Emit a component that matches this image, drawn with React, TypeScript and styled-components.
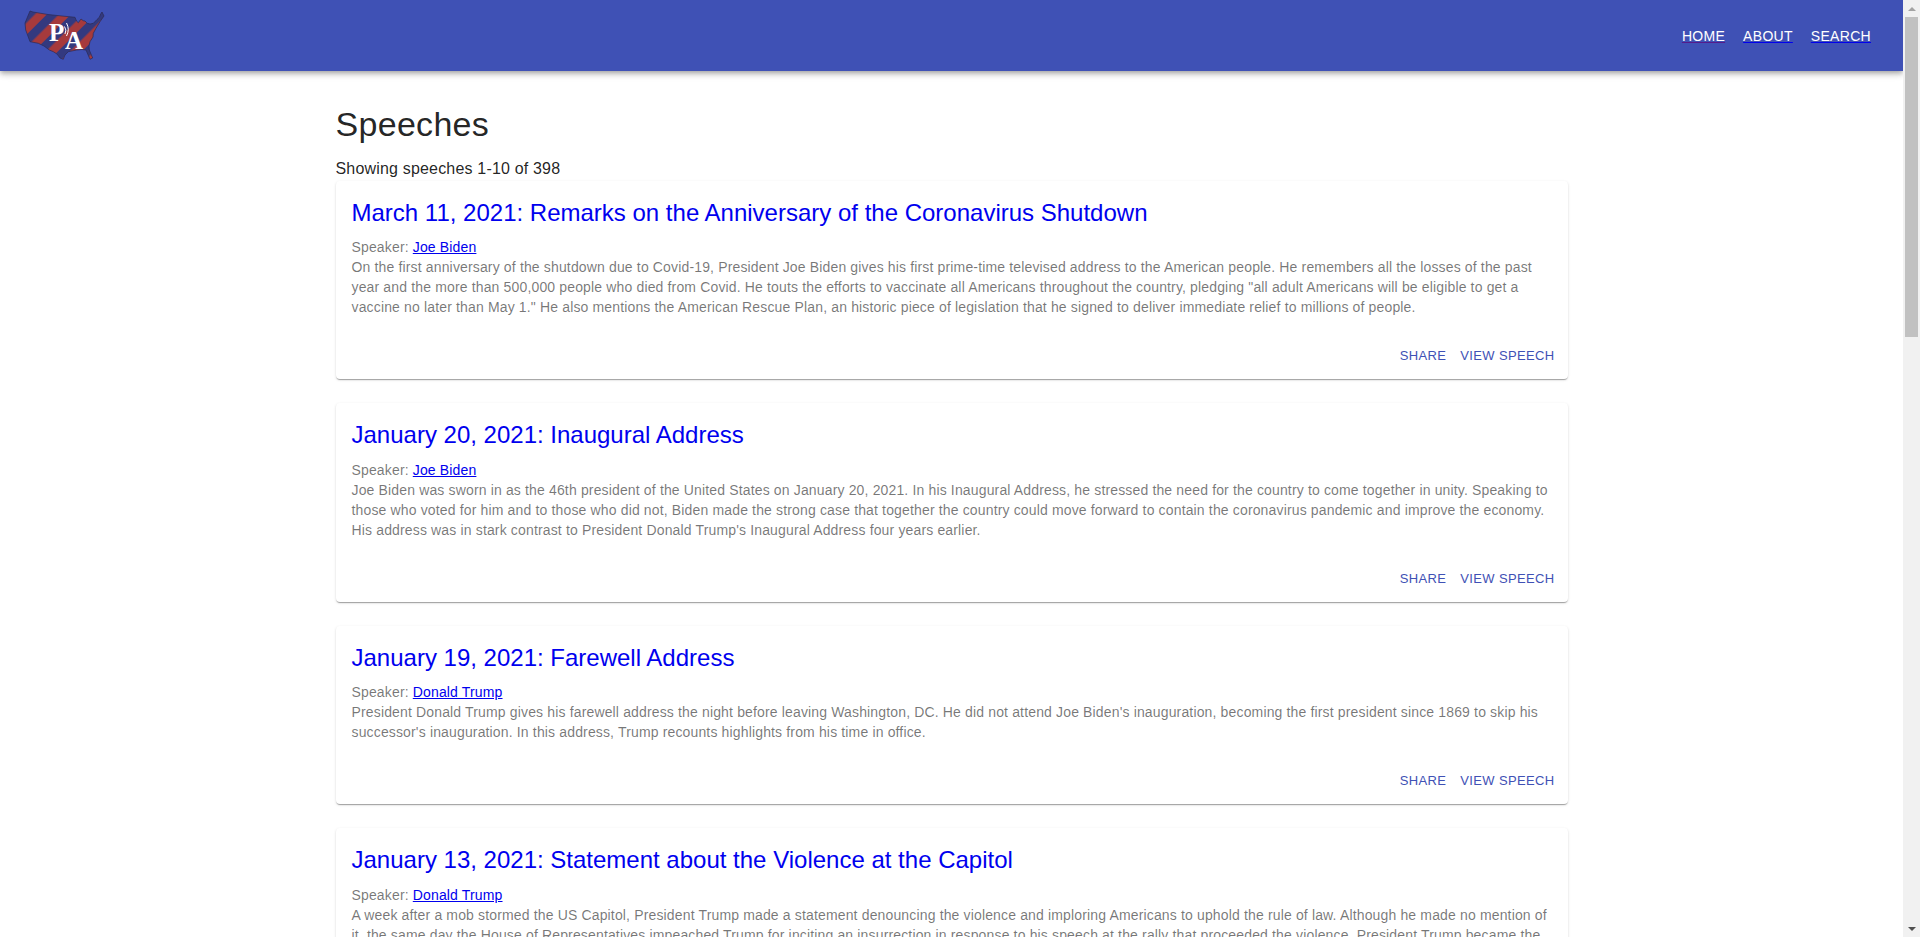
import React from 'react';
import styled, { createGlobalStyle } from 'styled-components';

const GlobalStyle = createGlobalStyle`
    html, body {
        height: 100%;
        overflow: hidden;
    }
    body {
        margin: 0;
        background: #fff;
        color: rgba(0, 0, 0, 0.87);
        font-family: "Liberation Sans", Arial, sans-serif;
    }
`;

const Shell = styled.div`
    display: flex;
    height: 100vh;
`;

const PageColumn = styled.div`
    flex: 1;
    min-width: 0;
    overflow: hidden;
`;

const ScrollRail = styled.div`
    display: flex;
    flex-direction: column;
    flex: none;
    width: 17px;
    background: #f1f1f1;
`;

const ScrollArrow = styled.div<{ down?: boolean }>`
    display: flex;
    flex: none;
    align-items: center;
    justify-content: center;
    height: 17px;

    &::before {
        content: '';
        border-left: 4px solid transparent;
        border-right: 4px solid transparent;
        border-top: ${props => (props.down ? '4px solid #505050' : '0')};
        border-bottom: ${props => (props.down ? '0' : '4px solid #a3a3a3')};
    }
`;

const ScrollThumb = styled.div`
    flex: none;
    height: 320px;
    margin: 0 2px;
    background: #c1c1c1;
`;

const ScrollSpacer = styled.div`
    flex: 1;
`;

const AppBar = styled.header`
    display: flex;
    align-items: center;
    justify-content: space-between;
    height: 71px;
    padding: 0 32px 0 24px;
    background: #3f51b5;
    box-shadow: 0 2px 4px -1px rgba(0, 0, 0, 0.2), 0 4px 5px 0 rgba(0, 0, 0, 0.14), 0 1px 10px 0 rgba(0, 0, 0, 0.12);
`;

const Nav = styled.nav`
    display: flex;
    gap: 18px;
`;

const NavLink = styled.a<{ visited?: boolean }>`
    color: ${props => (props.visited ? '#551a8b' : '#0000ee')};
    font-size: 14px;
    letter-spacing: 0.3px;
    text-transform: uppercase;
    text-decoration: underline;
`;

const NavLabel = styled.span`
    color: #fff;
`;

const Main = styled.main`
    width: 1232px;
    margin: 0 auto;
    padding-top: 32px;
`;

const PageTitle = styled.h1`
    margin: 0 0 12px;
    font-size: 34px;
    font-weight: 400;
    line-height: 42px;
    letter-spacing: 0.3px;
`;

const ResultCount = styled.div`
    font-size: 16px;
    line-height: 24px;
    letter-spacing: 0.18px;
`;

const CardList = styled.div`
    display: flex;
    flex-direction: column;
    gap: 24px;
`;

const Card = styled.article`
    border-radius: 4px;
    background: #fff;
    box-shadow: 0 2px 1px -1px rgba(0, 0, 0, 0.2), 0 1px 1px 0 rgba(0, 0, 0, 0.14), 0 1px 3px 0 rgba(0, 0, 0, 0.12);
`;

const CardContent = styled.div`
    padding: 16px;
`;

const SpeechTitle = styled.h2`
    margin: 0 0 8.4px;
    font-size: 24px;
    font-weight: 400;
    line-height: 32px;
`;

const TitleLink = styled.a`
    color: #0000ee;
    text-decoration: none;
`;

const Description = styled.div`
    color: rgba(0, 0, 0, 0.54);
    font-size: 14px;
    line-height: 20px;
    letter-spacing: 0.15px;
`;

const SpeakerLink = styled.a`
    color: #0000ee;
    text-decoration: underline;
`;

const CardActions = styled.div`
    display: flex;
    justify-content: flex-end;
    gap: 4px;
    padding: 8px;
`;

const ActionButton = styled.a`
    padding: 4px 5px;
    color: #3f51b5;
    font-size: 13px;
    line-height: 22px;
    letter-spacing: 0.35px;
    text-transform: uppercase;
`;

const LogoBox = styled.svg`
    display: block;
    width: 82px;
    height: 52px;
    margin-top: -1px;
    overflow: visible;
`;

const Logo = () => (
    <LogoBox viewBox="0 0 82 52">
        <defs>
            <pattern id="stripes" width="17" height="17" patternUnits="userSpaceOnUse" patternTransform="rotate(45) translate(3 0)">
                <rect width="17" height="17" fill="#a63a3c" />
                <rect width="8.500" height="17" fill="#33397f" />
            </pattern>
        </defs>
        <path
            d="M6 2 L9 3 L24 5.500 L38 7 L51 8.300 L52.500 12 L54.300 13.700 L57 10 L59.300 11.700 L61 12 L63.300 14.300 L66 15 L69.300 14.300 L73 10.500 L75.300 8.300 L76.700 5 L78 3 L80 7 L76 12.700 L72 19.300 L69.300 24.300 L69 28 L66 32.700 L65 37 L65.300 41 L68.700 49 L66 50.300 L62 41 L58 40.500 L52.700 41 L44.300 42.700 L41 46 L39.300 50.300 L36 49 L33 45 L29.300 42.700 L25.300 41 L20 37 L14.300 34.300 L6 32.700 L1.700 21 L1 14 Z"
            fill="url(#stripes)"
            stroke="#2a2a55"
            strokeWidth="0.7"
            strokeLinejoin="round"
        />
        <text x="25" y="32" fill="#fff" fontFamily="'Liberation Serif', serif" fontWeight="700" fontSize="25">P</text>
        <text x="41" y="40" fill="#fff" fontFamily="'Liberation Serif', serif" fontWeight="700" fontSize="25">A</text>
        <path d="M40.500 17.500 Q43 21 41 25 M42.500 14 Q46 20.500 42.500 27" fill="none" stroke="#fff" strokeWidth="1" />
    </LogoBox>
);

interface Speech {
    title: string;
    speaker: string;
    description: string;
}

const SPEECHES: Speech[] = [
    {
        title: 'March 11, 2021: Remarks on the Anniversary of the Coronavirus Shutdown',
        speaker: 'Joe Biden',
        description:
            'On the first anniversary of the shutdown due to Covid-19, President Joe Biden gives his first prime-time televised address to the American people. He remembers all the losses of the past year and the more than 500,000 people who died from Covid. He touts the efforts to vaccinate all Americans throughout the country, pledging "all adult Americans will be eligible to get a vaccine no later than May 1." He also mentions the American Rescue Plan, an historic piece of legislation that he signed to deliver immediate relief to millions of people.',
    },
    {
        title: 'January 20, 2021: Inaugural Address',
        speaker: 'Joe Biden',
        description:
            "Joe Biden was sworn in as the 46th president of the United States on January 20, 2021. In his Inaugural Address, he stressed the need for the country to come together in unity. Speaking to those who voted for him and to those who did not, Biden made the strong case that together the country could move forward to contain the coronavirus pandemic and improve the economy. His address was in stark contrast to President Donald Trump's Inaugural Address four years earlier.",
    },
    {
        title: 'January 19, 2021: Farewell Address',
        speaker: 'Donald Trump',
        description:
            "President Donald Trump gives his farewell address the night before leaving Washington, DC. He did not attend Joe Biden's inauguration, becoming the first president since 1869 to skip his successor's inauguration. In this address, Trump recounts highlights from his time in office.",
    },
    {
        title: 'January 13, 2021: Statement about the Violence at the Capitol',
        speaker: 'Donald Trump',
        description:
            'A week after a mob stormed the US Capitol, President Trump made a statement denouncing the violence and imploring Americans to uphold the rule of law. Although he made no mention of it, the same day the House of Representatives impeached Trump for inciting an insurrection in response to his speech at the rally that proceeded the violence. President Trump became the first president to be impeached twice.',
    },
];

const App: React.FunctionComponent = () => (
    <>
        <GlobalStyle />
        <Shell>
            <PageColumn>
                <AppBar>
                    <Logo />
                    <Nav>
                        <NavLink href="#" visited><NavLabel>Home</NavLabel></NavLink>
                        <NavLink href="#"><NavLabel>About</NavLabel></NavLink>
                        <NavLink href="#"><NavLabel>Search</NavLabel></NavLink>
                    </Nav>
                </AppBar>
                <Main>
                    <PageTitle>Speeches</PageTitle>
                    <ResultCount>Showing speeches 1-10 of 398</ResultCount>
                    <CardList>
                        {SPEECHES.map(speech => (
                            <Card key={speech.title}>
                                <CardContent>
                                    <SpeechTitle><TitleLink href="#">{speech.title}</TitleLink></SpeechTitle>
                                    <Description>
                                        Speaker: <SpeakerLink href="#">{speech.speaker}</SpeakerLink>
                                    </Description>
                                    <Description>{speech.description}</Description>
                                </CardContent>
                                <CardActions>
                                    <ActionButton>Share</ActionButton>
                                    <ActionButton>View Speech</ActionButton>
                                </CardActions>
                            </Card>
                        ))}
                    </CardList>
                </Main>
            </PageColumn>
            <ScrollRail>
                <ScrollArrow />
                <ScrollThumb />
                <ScrollSpacer />
                <ScrollArrow down />
            </ScrollRail>
        </Shell>
    </>
);

export default App;
